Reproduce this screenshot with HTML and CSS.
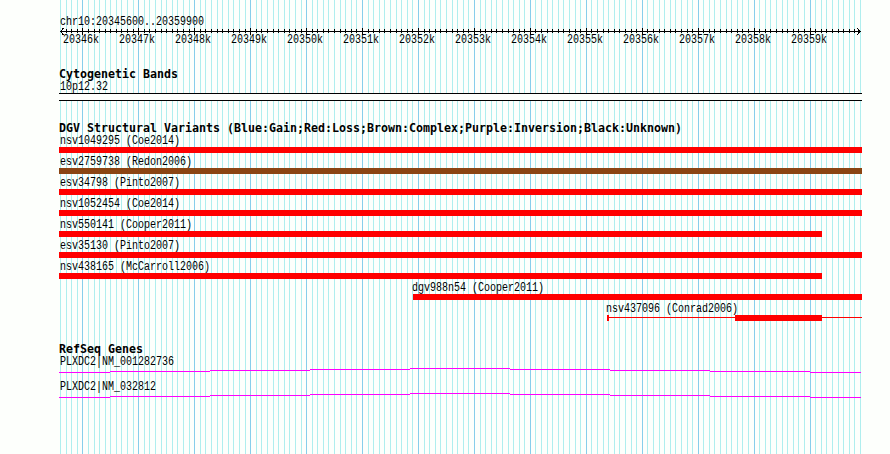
FILE: index.html
```html
<!DOCTYPE html>
<html lang="en">
<head>
<meta charset="utf-8">
<title>chr10:20345600..20359900</title>
<link rel="stylesheet" href="styles.css">
</head>
<body>
<main class="browser">
  <svg class="grid" id="grid" width="803" height="454" aria-hidden="true"></svg>
  <section class="ruler">
    <p class="label">chr10:20345600..20359900</p>
    <svg class="axis" id="axis" width="803" height="9" aria-hidden="true"></svg>
    <div class="ticks" id="ticks"></div>
  </section>
  <section class="bands">
    <h2 class="title">Cytogenetic Bands</h2>
    <p class="label">10p12.32</p>
    <div class="band"></div>
  </section>
  <section class="variants">
    <h2 class="title">DGV Structural Variants (Blue:Gain;Red:Loss;Brown:Complex;Purple:Inversion;Black:Unknown)</h2>
    <div class="variant"><p class="label">nsv1049295 (Coe2014)</p><div class="bar"></div></div>
    <div class="variant"><p class="label">esv2759738 (Redon2006)</p><div class="bar complex"></div></div>
    <div class="variant"><p class="label">esv34798 (Pinto2007)</p><div class="bar"></div></div>
    <div class="variant"><p class="label">nsv1052454 (Coe2014)</p><div class="bar"></div></div>
    <div class="variant short"><p class="label">nsv550141 (Cooper2011)</p><div class="bar"></div></div>
    <div class="variant"><p class="label">esv35130 (Pinto2007)</p><div class="bar"></div></div>
    <div class="variant short"><p class="label">nsv438165 (McCarroll2006)</p><div class="bar"></div></div>
    <div class="variant late"><p class="label">dgv988n54 (Cooper2011)</p><div class="bar"></div></div>
    <div class="variant split"><p class="label">nsv437096 (Conrad2006)</p>
      <svg class="parts" width="255" height="6" aria-hidden="true">
        <path d="M2 2h126v1H2zM215 2h40v1h-40z"/>
        <path d="M0 0h2v6H0zM128 0h87v6h-87z"/>
      </svg>
    </div>
  </section>
  <section class="genes">
    <h2 class="title">RefSeq Genes</h2>
    <div class="gene"><p class="label">PLXDC2|NM_001282736</p>
      <svg class="intron" width="803" height="5" aria-hidden="true"><path d="M0 4.5h51m0-1h100m0-1h100m0-1h100m0-1h100m0 1h100m0 1h100m0 1h100m0 1h51"/></svg></div>
    <div class="gene"><p class="label">PLXDC2|NM_032812</p>
      <svg class="intron" width="803" height="5" aria-hidden="true"><path d="M0 4.5h51m0-1h100m0-1h100m0-1h100m0-1h100m0 1h100m0 1h100m0 1h100m0 1h51"/></svg></div>
  </section>
</main>
<script src="grid.js"></script>
</body>
</html>
```
FILE: styles.css
```css
body { margin: 0; background: #fdfffc; color: #000; }
.browser { position: relative; width: 803px; height: 454px; padding-left: 59px; overflow: hidden; }
.grid { position: absolute; left: 59px; top: 0; z-index: -1; }
.grid .minor { fill: #afeeee; }
.grid .major { fill: #87ceeb; }
svg { display: block; shape-rendering: crispEdges; }
.label, .ticks span { margin: 0; font: 10px/10px "Liberation Mono", monospace; white-space: pre; transform: scaleY(1.2); }
.label { padding: 2px 0 0 1px; height: 10px; }
.title { margin: 0; height: 12px; font: bold 11.63px/13px "DejaVu Sans Mono", monospace; white-space: pre; }
.ruler { padding-top: 15px; }
.axis path { fill: none; stroke: #000; }
.ticks { display: flex; padding: 1px 0 0 4px; margin-top: -1px; height: 11px; }
.ticks span { width: 56px; flex: none; }
.bands { padding-top: 21px; }
.band { height: 6px; margin-top: 1px; border: solid #000; border-width: 1px 0; background: #fdfffc; }
.variants { padding-top: 21px; }
.variant { height: 21px; }
.bar { height: 6px; margin-top: 1px; background: #f00; }
.complex { background: #8b4513; }
.short .bar { width: 763px; }
.late { margin-left: 354px; }
.late .label, .split .label { margin-left: -2px; }
.split { margin-left: 548px; }
.parts { margin-top: 1px; fill: #f00; }
.genes { padding-top: 20px; }
.gene { height: 25px; }
.intron { margin-top: 1px; }
.intron path { fill: none; stroke: #f0f; }
```
FILE: grid.js
```js
const PX_PER_TICK = 800 / 143;
const NS = 'http://www.w3.org/2000/svg';
const xOf = i => Math.floor(1.45 + i * PX_PER_TICK);
const addPath = (svg, d, cls) => {
  const path = document.createElementNS(NS, 'path');
  path.setAttribute('d', d);
  if (cls) path.setAttribute('class', cls);
  svg.append(path);
};
let minor = '', major = '', marks = 'M1 4.5h801M4.5 1l-3 3.5 3 3.5M798 1l3 3.5-3 3.5';
for (let i = 0; i <= 143; i++) {
  const x = xOf(i);
  const big = i % 10 === 4;
  const line = `M${x} 0h1v454h-1z`;
  if (big) major += line; else minor += line;
  if (i > 0 && i < 143) marks += big ? `M${x + .5} 1v7` : `M${x + .5} 2v4`;
}
addPath(document.getElementById('grid'), minor, 'minor');
addPath(document.getElementById('grid'), major, 'major');
addPath(document.getElementById('axis'), marks);
const ticks = document.getElementById('ticks');
for (let k = 20346; k <= 20359; k++) {
  const span = document.createElement('span');
  span.textContent = k + 'k';
  ticks.append(span);
}
```
